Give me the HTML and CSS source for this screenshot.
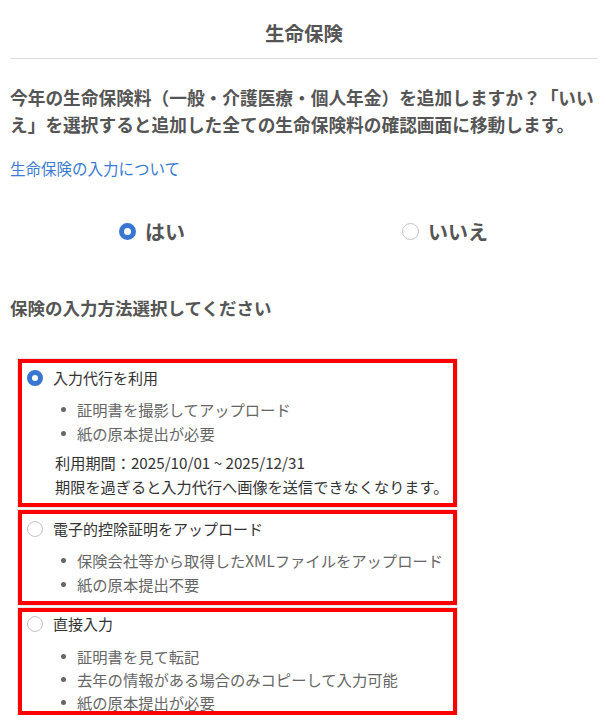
FILE: index.html
```html
<!DOCTYPE html>
<html lang="ja">
<head>
    <meta charset="UTF-8">
    <meta name="viewport" content="width=device-width, initial-scale=1.0">
    <title>生命保険</title>
    <link rel="stylesheet" href="styles.css">
</head>
<body>

    <header class="page-header">
        <h1>生命保険</h1>
    </header>

    <p class="lead">今年の生命保険料（一般・介護医療・個人年金）を追加しますか？「いいえ」を選択すると追加した全ての生命保険料の確認画面に移動します。</p>

    <a class="help-link" href="#">生命保険の入力について</a>

    <div class="yes-no">
        <label class="yes-no-item">
            <input type="radio" name="add" checked>
            <span>はい</span>
        </label>
        <label class="yes-no-item">
            <input type="radio" name="add">
            <span>いいえ</span>
        </label>
    </div>

    <h2 class="section-title">保険の入力方法選択してください</h2>

    <div class="options">
        <div class="option">
            <label class="option-label">
                <input type="radio" name="method" checked>
                <span>入力代行を利用</span>
            </label>
            <ul class="option-points">
                <li>証明書を撮影してアップロード</li>
                <li>紙の原本提出が必要</li>
            </ul>
            <p class="option-note">利用期間：2025/10/01 ~ 2025/12/31<br>期限を過ぎると入力代行へ画像を送信できなくなります。</p>
        </div>

        <div class="option">
            <label class="option-label">
                <input type="radio" name="method">
                <span>電子的控除証明をアップロード</span>
            </label>
            <ul class="option-points">
                <li>保険会社等から取得したXMLファイルをアップロード</li>
                <li>紙の原本提出不要</li>
            </ul>
        </div>

        <div class="option option-last">
            <label class="option-label">
                <input type="radio" name="method">
                <span>直接入力</span>
            </label>
            <ul class="option-points">
                <li>証明書を見て転記</li>
                <li>去年の情報がある場合のみコピーして入力可能</li>
                <li>紙の原本提出が必要</li>
            </ul>
        </div>
    </div>

</body>
</html>
```

FILE: styles.css
```css
* {
    box-sizing: border-box;
    margin: 0;
    padding: 0;
}
body {
    font-family: "Noto Sans CJK JP", "Noto Sans", sans-serif;
    background-color: #fff;
    color: #555;
    padding: 0 8px 0 10px;
    overflow: hidden;
}
.page-header {
    padding: 19px 0 11px;
    border-bottom: 1px solid #ddd;
    text-align: center;
}
.page-header h1 {
    font-size: 19.5px;
    line-height: 28px;
    font-weight: bold;
    color: #555;
}
.lead {
    margin-top: 25px;
    font-size: 17.7px;
    line-height: 27px;
    font-weight: bold;
    color: #555;
}
.help-link {
    display: block;
    margin-top: 19px;
    font-size: 15.5px;
    line-height: 22px;
    color: #3a7bd5;
    text-decoration: none;
}
.yes-no {
    display: grid;
    grid-template-columns: 1fr 1fr;
    margin-top: 37px;
    height: 30px;
}
.yes-no-item {
    display: flex;
    align-items: center;
    justify-content: center;
    gap: 9px;
    font-size: 20px;
    font-weight: bold;
    color: #555;
}
.yes-no-item:first-child {
    padding-right: 10px;
}
.yes-no-item:last-child {
    padding-right: 12px;
}
.yes-no-item input[type="radio"] {
    width: 17px;
    height: 17px;
}
input[type="radio"] {
    appearance: none;
    -webkit-appearance: none;
    width: 16px;
    height: 16px;
    border-radius: 50%;
    border: 1px solid #c4c4c4;
    background-color: #fff;
    flex-shrink: 0;
}
input[type="radio"]:checked {
    border: 5px solid #3776d1;
}
.section-title {
    margin-top: 49px;
    font-size: 17.5px;
    line-height: 26px;
    font-weight: bold;
    color: #555;
}
.options {
    display: flex;
    flex-direction: column;
    gap: 3px;
    margin-top: 38px;
    width: 439px;
    margin-left: 8px;
}
.option {
    position: relative;
    padding: 8px 0 9px 9px;
}
.option::after {
    content: "";
    position: absolute;
    inset: 0;
    border: 4px solid #f00;
    box-shadow: 0 0 0 1px #e6e6e6;
    pointer-events: none;
}
.option-last {
    height: 107px;
    padding-top: 5px;
}
.option-label {
    display: flex;
    align-items: center;
    gap: 10px;
    font-size: 15px;
    line-height: 22px;
    color: #333;
}
.option-points {
    list-style: none;
    margin-top: 9px;
    padding-left: 34px;
}
.option-points li {
    display: flex;
    align-items: center;
    gap: 11px;
    font-size: 15.3px;
    line-height: 23.5px;
    color: #666;
    white-space: nowrap;
}
.option-points li::before {
    content: "";
    width: 5px;
    height: 5px;
    border-radius: 50%;
    background-color: #666;
    flex-shrink: 0;
}
.option-last .option-points {
    margin-top: 10px;
}
.option-last .option-points li {
    line-height: 23px;
}
.option-note {
    margin-top: 5px;
    padding-left: 28px;
    font-size: 15.2px;
    line-height: 24px;
    color: #333;
    white-space: nowrap;
}
```
